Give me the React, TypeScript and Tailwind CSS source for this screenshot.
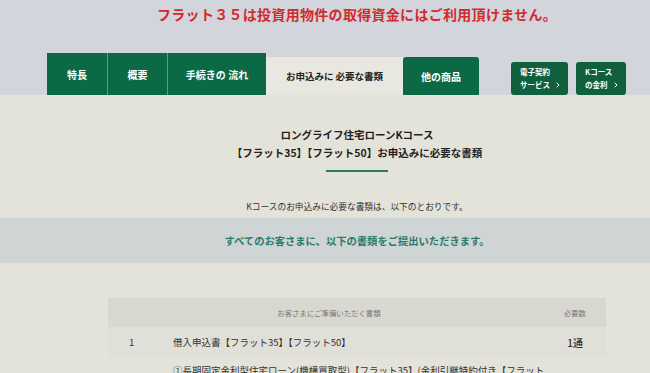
import { ChevronRight } from "lucide-react";

const jp = { fontFamily: '"Noto Sans CJK JP", "Noto Sans", sans-serif' };

const leftTabs = [
    { label: "特長", w: "w-[60px]" },
    { label: "概要", w: "w-[60px]" },
    { label: "手続きの 流れ", w: "w-[99px]" }
];

function SideButton({ top, bottom, w }: { top: string; bottom: string; w: string }) {
    return (
        <div className={`${w} h-[33px] rounded-[3px] bg-[#10603e] pl-[9px] pt-[3px] text-[7.5px] font-bold leading-[13px] text-white`}>
            <div>{top}</div>
            <div className="flex items-center gap-[4px]">
                {bottom}
                <ChevronRight className="h-[8px] w-[8px]" strokeWidth={3} />
            </div>
        </div>
    );
}

export default function App() {
    return (
        <div style={jp} className="h-[373px] w-[650px] overflow-hidden bg-[#e4e3da]">
            {/* header */}
            <div className="flex h-[95px] flex-col bg-[#d3d5dd]">
                <p className="pl-[64px] pt-[4px] text-center text-[14px] font-bold leading-[20px] tracking-[0.3px] text-[#d12a2c]">
                    フラット３５は投資用物件の取得資金にはご利用頂けません。
                </p>
                <div className="mt-auto flex items-end pl-[47px]">
                    {leftTabs.map((t, i) => (
                        <div
                            key={t.label}
                            className={`${t.w} flex h-[42px] items-center justify-center bg-[#0b6a45] text-[10px] font-bold text-white ${
                                i > 0 ? "border-l border-[#5f9a7e]" : ""
                            }`}
                        >
                            {t.label}
                        </div>
                    ))}
                    <div className="flex h-[38px] w-[137px] items-center justify-center bg-[#e9e8e0] text-[9.5px] font-bold text-[#222]">
                        お申込みに 必要な書類
                    </div>
                    <div className="flex h-[38px] w-[76px] items-center justify-center rounded-t-[3px] bg-[#0b6a45] text-[10px] font-bold text-white">
                        他の商品
                    </div>
                    <div className="ml-[32px] flex gap-[8px]">
                        <SideButton top="電子契約" bottom="サービス" w="w-[57px]" />
                        <SideButton top="Kコース" bottom="の金利" w="w-[50px]" />
                    </div>
                </div>
            </div>

            {/* title */}
            <div className="pl-[64px] pt-[31px] text-center">
                <h1 className="text-[10.5px] font-bold leading-[18px] text-[#222]">
                    ロングライフ住宅ローンKコース
                    <br />
                    【フラット35】【フラット50】お申込みに必要な書類
                </h1>
                <div className="mx-auto mt-[8px] h-[2px] w-[62px] bg-[#2c7a57]" />
                <p className="mt-[28px] text-[8.7px] leading-[14px] text-[#333]">
                    Kコースのお申込みに必要な書類は、以下のとおりです。
                </p>
            </div>

            {/* band */}
            <div className="mt-[4px] flex h-[45px] items-center justify-center bg-[#cfd4d5] pl-[64px] text-[10.3px] font-bold text-[#2b7b68]">
                すべてのお客さまに、以下の書類をご提出いただきます。
            </div>

            {/* table */}
            <div className="pl-[64px] pt-[35px]">
                <div className="mx-auto w-[498px] text-[#333]">
                    <div className="flex h-[29px] items-center bg-[#d8d8d0] text-[7.4px] text-[#777]">
                        <div className="w-[442px] text-center">お客さまにご準備いただく書類</div>
                        <div className="flex-1 pr-[20px] text-right">必要数</div>
                    </div>
                    <div className="flex h-[30px] items-center bg-[#e1e0d8] text-[9.5px]">
                        <div className="w-[65px] pl-[21px]">1</div>
                        <div className="flex-1">借入申込書【フラット35】【フラット50】</div>
                        <div className="pr-[23px] text-[10px] font-medium">1通</div>
                    </div>
                    <div className="flex pt-[6px] text-[9.5px] leading-[14px]">
                        <div className="w-[65px]" />
                        <div className="flex-1 whitespace-nowrap">
                            ①長期固定金利型住宅ローン(機構買取型)【フラット35】(金利引継特約付き【フラット
                        </div>
                    </div>
                </div>
            </div>
        </div>
    );
}
